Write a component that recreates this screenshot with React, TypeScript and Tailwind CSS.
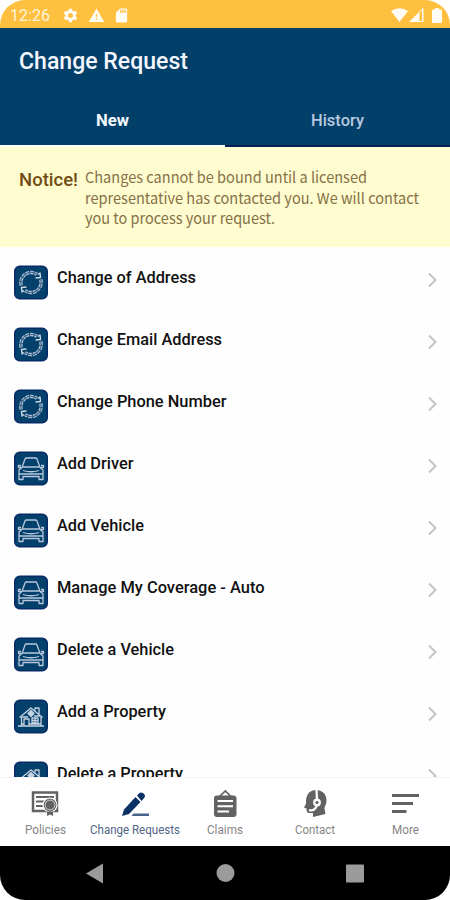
import type { ReactNode } from "react";
import { MdSdCard, MdSettings, MdWarning } from "react-icons/md";

type IconKind = "change" | "car" | "house";

const requests: { label: string; icon: IconKind; width: number }[] = [
  { label: "Change of Address", icon: "change", width: 139 },
  { label: "Change Email Address", icon: "change", width: 165 },
  { label: "Change Phone Number", icon: "change", width: 169.5 },
  { label: "Add Driver", icon: "car", width: 76.5 },
  { label: "Add Vehicle", icon: "car", width: 87 },
  { label: "Manage My Coverage - Auto", icon: "car", width: 207.5 },
  { label: "Delete a Vehicle", icon: "car", width: 117 },
  { label: "Add a Property", icon: "house", width: 109 },
  { label: "Delete a Property", icon: "house", width: 126 },
];

function Label({ children, width, size, className = "" }: { children: string; width: number; size: number; className?: string }) {
  return (
    <svg width={width} height={size * 1.4} className={`block shrink-0 overflow-visible ${className}`} fill="currentColor">
      <text x="0" y={size * 1.05} fontSize={size} textLength={width} lengthAdjust="spacingAndGlyphs">
        {children}
      </text>
    </svg>
  );
}

function ChangeGlyph() {
  return (
    <g fill="none" stroke="#b4c4d8">
      <path d="M7.200 20A10.300 10.300 0 0 1 23 8.800" strokeWidth="3.400" strokeDasharray="3.600 .8" />
      <path d="M26.800 14A10.300 10.300 0 0 1 11 25.200" strokeWidth="3.400" strokeDasharray="3.600 .8" />
      <path d="M7.200 20A10.300 10.300 0 0 1 23 8.800M26.800 14A10.300 10.300 0 0 1 11 25.200" stroke="#3c6489" strokeWidth="1.200" />
      <path d="M21.500 12.500l5-.5-.5-4.500-2 1.500M12.500 21.500l-5 .5.500 4.500 2-1.500" stroke="#d0dbe7" strokeWidth="1.400" strokeLinejoin="round" />
    </g>
  );
}

function CarGlyph() {
  return (
    <g fill="none" stroke="#b9c8db" strokeWidth="1.300" strokeLinejoin="round">
      <path d="M8 16l3-8.500q.4-1 1.500-1h9q1.100 0 1.500 1L26 16l3 2.500V28h-4v-3H9v3H5v-9.500z" />
      <path d="M8.500 15.500h17M9 19q8 2.500 16 0M9 22.500h16M5 22.500h4M25 22.500h4M7 14H4.500v2h3M27 14h2.500v2h-3" />
    </g>
  );
}

function HouseGlyph() {
  return (
    <g fill="none" stroke="#c5d3e3" strokeWidth="1.300" strokeLinejoin="round">
      <path d="M5.500 18L17 8.500 28.500 18M7.500 17.500V26M27 17.500V26M4 26.500h26M21 11V8.500h4V15" />
      <path d="M10 26v-6.500h5V26M18 18.500h6v5h-6zM21 18.500v5M18 21h6M8 17.500h6M20 16.500h6M7 24.500h3M15 24.500h12" />
      <path d="M17 11l3 3-3 3-3-3z" fill="#c5d3e3" />
    </g>
  );
}

const glyphs: Record<IconKind, ReactNode> = {
  change: <ChangeGlyph />,
  car: <CarGlyph />,
  house: <HouseGlyph />,
};

function StatusBar() {
  return (
    <div className="flex h-[28px] shrink-0 items-center bg-[#ffbf3f] pt-0.5 pl-[10px] pr-[8px] text-[#fffdf6]">
      <Label width={40} size={17} className="-mt-px text-[#fff5de]">12:26</Label>
      <MdSettings size={17} className="ml-[12px]" />
      <MdWarning size={17} className="ml-[9px]" />
      <MdSdCard size={17} className="ml-[8px]" />
      <svg width="17" height="15" viewBox="0 0 17 15" fill="currentColor" className="ml-auto">
        <path d="M0 3Q8.500-2.500 17 3L8.500 14z" />
      </svg>
      <svg width="15" height="16" viewBox="0 0 15 16" fill="currentColor" className="ml-[1px]">
        <path fillRule="evenodd" d="M0 15L14.500.5V15zM10.500 5.500V14h2.500V3z" />
      </svg>
      <svg width="10" height="15" viewBox="0 0 10 15" fill="currentColor" className="ml-[8px]">
        <path d="M3 0h4v1.500h2q1 0 1 1V14q0 1-1 1H1q-1 0-1-1V2.500q0-1 1-1h2z" />
      </svg>
    </div>
  );
}

function Header() {
  return (
    <header className="flex h-[119px] shrink-0 flex-col bg-[#034069] font-medium text-[#f4f7ff]">
      <h1 className="pl-[19px] pt-[16px]">
        <Label width={169} size={24}>Change Request</Label>
      </h1>
      <div className="mt-auto grid h-[51px] grid-cols-2">
        <div className="flex justify-center border-b-2 border-white pt-[13px]">
          <Label width={33} size={16.5} className="font-bold">New</Label>
        </div>
        <div className="flex justify-center border-b-2 border-[#001f55] pt-[13px] text-[#b6c8df]">
          <Label width={53} size={16.5}>History</Label>
        </div>
      </div>
    </header>
  );
}

function Notice() {
  return (
    <section className="flex h-[100px] shrink-0 bg-[#fffccf] pl-[19px] pt-[20px]">
      <Label width={59} size={18} className="font-medium text-[#714c13]">Notice!</Label>
      <div className="ml-[7px] flex flex-col font-['Noto_Sans_CJK_SC',sans-serif] text-[#857047]">
        <Label width={282} size={15}>Changes cannot be bound until a licensed</Label>
        <Label width={334} size={15} className="-mt-[0.500px]">representative has contacted you. We will contact</Label>
        <Label width={190} size={15} className="-mt-[0.500px]">you to process your request.</Label>
      </div>
    </section>
  );
}

function RequestRow({ label, icon, width }: { label: string; icon: IconKind; width: number }) {
  return (
    <li className="flex h-[62.050px] shrink-0 items-start pl-[14px] pr-[13px]">
      <svg width="34" height="35" viewBox="0 0 34 34" className="shrink-0">
        <rect x="0.750" y="0.750" width="32.500" height="32.500" rx="5" fill="#03406c" stroke="#062b66" strokeWidth="1.500" />
        {glyphs[icon]}
      </svg>
      <Label width={width} size={16.5} className="ml-[9px] mt-px font-medium text-[#111]">{label}</Label>
      <svg width="9" height="16" viewBox="0 0 9 16" fill="none" stroke="#c4c4c4" strokeWidth="2" className="ml-auto mt-[7px]">
        <path d="M1 1.500L7.500 8 1 14.500" />
      </svg>
    </li>
  );
}

const tabs: { label: string; width: number; active?: boolean; icon: ReactNode }[] = [
  {
    label: "Policies",
    width: 41,
    icon: (
      <>
        <path d="M3 3.500h24v18.500H3z" fill="none" stroke="currentColor" strokeWidth="2.500" />
        <path d="M6 8h18M6 12.500h9M6 17h7" stroke="currentColor" strokeWidth="2" />
        <circle cx="20" cy="16" r="7" fill="currentColor" stroke="white" strokeWidth="1.200" />
        <circle cx="20" cy="16" r="4.900" fill="none" stroke="white" strokeWidth=".7" />
        <path d="M17 22.500h6v4.500l-3-1.500-3 1.500z" />
      </>
    ),
  },
  {
    label: "Change Requests",
    width: 90,
    active: true,
    icon: (
      <>
        <path d="M2 27l2-6.500L15.500 8l5 5L9 25zM17 6.500l2.500-2.500c2.500-2 7 2.200 5 4.500L21.500 12z" />
        <path d="M13.500 24.500H29v2.500H11.500z" opacity=".75" />
      </>
    ),
  },
  {
    label: "Claims",
    width: 36,
    icon: (
      <>
        <rect x="4" y="6.500" width="22.500" height="21.500" rx="3" />
        <path d="M9 8l6.300-6L21.500 8" fill="none" stroke="currentColor" strokeWidth="1.700" />
        <path d="M7.500 12h15.500M7.500 17.300h15.500M7.500 22.600h11.500" stroke="white" strokeWidth="2" />
      </>
    ),
  },
  {
    label: "Contact",
    width: 40,
    icon: (
      <>
        <path d="M13 28v-4H9c-2 0-2.500-1.500-2.500-4.500L4 18.500l2-4C5.500 6 9.500 1 16 1c7 0 11 5 10.500 11.500-.4 3.500-2 5-2 7l1 5.500z" />
        <path d="M16.500 1l.5 10M9 21c4 1.500 7-1 8-5" fill="none" stroke="white" strokeWidth="2.300" />
        <circle cx="17" cy="13.500" r="3.900" fill="white" />
        <circle cx="17" cy="13.500" r="1.600" />
      </>
    ),
  },
  {
    label: "More",
    width: 27,
    icon: <path d="M2 6.500h27M2 14.500h21M2 22.500h14.500" stroke="currentColor" strokeWidth="3.200" />,
  },
];

function BottomTabs() {
  return (
    <nav className="grid h-[69px] shrink-0 grid-cols-5 border-t border-[#f5f5f5] bg-white">
      {tabs.map((tab) => (
        <div key={tab.label} className={`flex flex-col items-center pt-[11px] ${tab.active ? "text-[#0b3264]" : "text-[#626262]"}`}>
          <svg width="30" height="30" viewBox="0 0 30 30" fill="currentColor">{tab.icon}</svg>
          <Label width={tab.width} size={12} className={tab.active ? "mt-[2px] text-[#506584]" : "mt-[2px] text-[#858585]"}>
            {tab.label}
          </Label>
        </div>
      ))}
    </nav>
  );
}

function SystemNav() {
  return (
    <div className="flex h-[54px] shrink-0 items-center bg-black px-[86px] text-[#9b9b9b]">
      <svg width="278" height="22" viewBox="0 0 278 22" fill="currentColor">
        <path d="M0 11.500L17 1.500v20z" />
        <circle cx="139.500" cy="11" r="9" />
        <rect x="260" y="2.500" width="18" height="18" rx="1" />
      </svg>
    </div>
  );
}

export default function App() {
  return (
    <div className="h-[900px] w-[450px] bg-white">
      <div className="flex h-full flex-col overflow-hidden rounded-[25px] bg-[#fefefe] font-[Roboto,sans-serif]">
        <StatusBar />
        <Header />
        <Notice />
        <ul className="flex min-h-0 flex-1 flex-col overflow-hidden pt-[18px]">
          {requests.map((request) => (
            <RequestRow key={request.label} {...request} />
          ))}
        </ul>
        <BottomTabs />
        <SystemNav />
      </div>
    </div>
  );
}
